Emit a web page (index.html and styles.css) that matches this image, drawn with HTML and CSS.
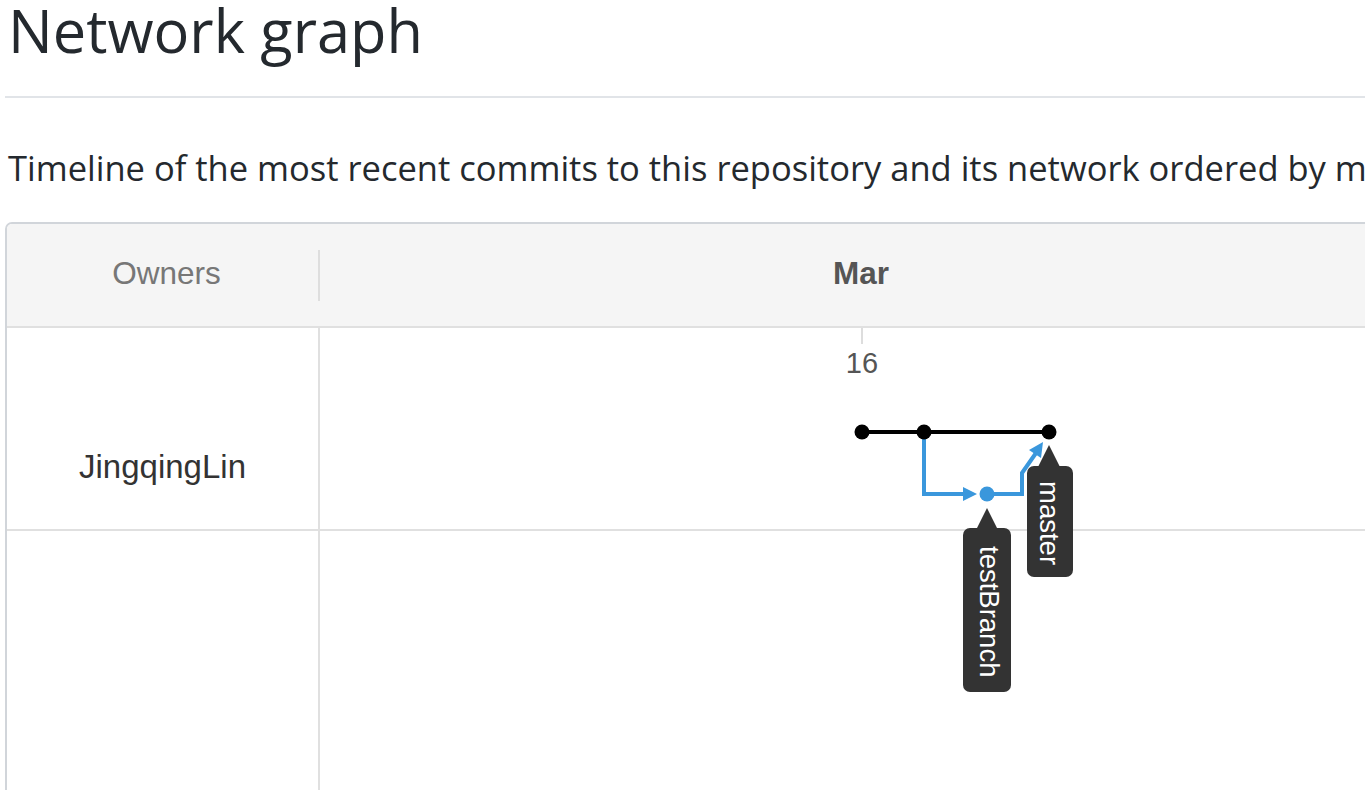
FILE: index.html
```html
<!DOCTYPE html>
<html lang="en">
<head>
<meta charset="utf-8">
<title>Network graph</title>
<link rel="stylesheet" href="styles.css">
</head>
<body>
<div class="page">
  <div class="subhead">
    <h2 class="subhead-heading">Network graph</h2>
  </div>
  <p class="lead">Timeline of the most recent commits to this repository and its network ordered by most recently pushed to.</p>
  <div class="network">
    <div class="net-head">
      <div class="head-owner">Owners</div>
      <div class="head-divider"></div>
      <div class="head-month"><span class="month">Mar</span></div>
    </div>
    <div class="net-body">
      <div class="owner-cell row1">JingqingLin</div>
      <div class="graph-cell row1"></div>
      <div class="owner-cell row2"></div>
      <div class="graph-cell row2"></div>
      <svg class="graph" width="1045" height="470" viewBox="0 0 1045 470">
        <line x1="542" y1="0" x2="542" y2="16" stroke="#dddddd" stroke-width="2"/>
        <text class="day" x="542" y="45" text-anchor="middle">16</text>
        <line x1="542" y1="104" x2="729" y2="104" stroke="#000" stroke-width="4"/>
        <polyline points="604,104 604,166 652,166" fill="none" stroke="#3a97dc" stroke-width="4"/>
        <polygon points="643,159 657,166 643,173" fill="#3a97dc"/>
        <polyline points="667,166 702,166 702,145 716,125" fill="none" stroke="#3a97dc" stroke-width="4"/>
        <polygon points="723,114 721,130 709,122" fill="#3a97dc"/>
        <circle cx="542" cy="104" r="7.5" fill="#000"/>
        <circle cx="604" cy="104" r="7.5" fill="#000"/>
        <circle cx="729" cy="104" r="7.5" fill="#000"/>
        <circle cx="667" cy="166" r="7.5" fill="#3a97dc"/>
        <polygon points="729,117 718,139 740,139" fill="#333"/>
        <rect x="707" y="138" width="46" height="111" rx="7" fill="#333"/>
        <text class="label" transform="translate(720,153) rotate(90)">master</text>
        <polygon points="667,180 656,202 678,202" fill="#333"/>
        <rect x="643" y="200" width="48" height="164" rx="7" fill="#333"/>
        <text class="label" transform="translate(660,218) rotate(90)">testBranch</text>
      </svg>
    </div>
  </div>
</div>
</body>
</html>
```

FILE: styles.css
```css
html, body {
  margin: 0;
  padding: 0;
  overflow: hidden;
  background: #fff;
}

.page {
  width: 1800px;
  padding: 0 5px;
  font-family: "Open Sans", "Noto Sans", sans-serif;
  color: #24292e;
}

.subhead {
  border-bottom: 2px solid #e1e4e8;
  height: 96px;
}

.subhead-heading {
  margin: 0;
  padding-left: 3px;
  font-size: 59.5px;
  font-weight: 400;
  line-height: 66px;
  transform: translateY(-3px);
}

.lead {
  margin: 45px 0 0;
  padding-left: 3px;
  font-size: 34.5px;
  line-height: 50px;
  white-space: nowrap;
}

.network {
  margin-top: 29px;
  border: 2px solid #d1d5da;
  border-radius: 7px;
  font-family: "Liberation Sans", Arial, Helvetica, sans-serif;
  overflow: hidden;
}

.net-head {
  display: grid;
  grid-template-columns: 311px 2px 1fr;
  align-items: center;
  height: 102px;
  background: #f5f5f5;
  border-bottom: 2px solid #e0e0e0;
}

.head-owner {
  padding-left: 8px;
  padding-bottom: 4px;
  text-align: center;
  font-size: 31.5px;
  color: #777;
  line-height: 36px;
}

.head-divider {
  height: 51px;
  background: #dedede;
}

.head-month {
  padding-top: 2px;
  line-height: 36px;
}

.month {
  display: inline-block;
  width: 100px;
  margin-left: 491px;
  text-align: center;
  font-size: 31.5px;
  font-weight: 700;
  color: #555;
}

.net-body {
  display: grid;
  grid-template-columns: 313px 1fr;
  grid-template-rows: 203px 400px;
}

.owner-cell {
  grid-column: 1;
  border-right: 2px solid #e0e0e0;
  text-align: center;
  font-size: 33px;
  color: #333;
  line-height: 38px;
}

.graph-cell {
  grid-column: 2;
}

.row1 {
  grid-row: 1;
  border-bottom: 2px solid #e0e0e0;
}

.row2 {
  grid-row: 2;
}

.owner-cell.row1 {
  padding-top: 120px;
}

.graph {
  grid-column: 2;
  grid-row: 1 / 3;
  align-self: start;
  overflow: visible;
}

.day {
  font-family: "Liberation Sans", Arial, sans-serif;
  font-size: 29px;
  fill: #555;
}

.label {
  font-family: "Liberation Sans", Arial, sans-serif;
  font-size: 27.5px;
  fill: #fff;
}
```
